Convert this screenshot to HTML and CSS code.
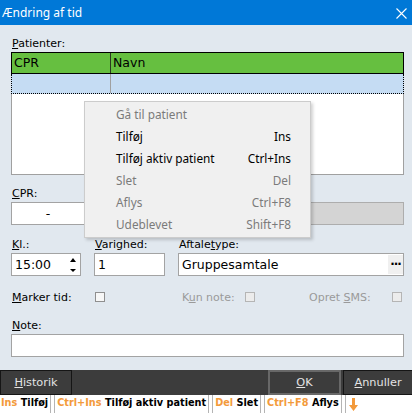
FILE: index.html
```html
<!DOCTYPE html>
<html lang="da">
<head>
<meta charset="utf-8">
<title>Ændring af tid</title>
<link rel="stylesheet" href="styles.css">
</head>
<body>
<div class="win">
  <div class="titlebar">
    <span class="title">Ændring af tid</span>
    <svg class="close" width="11" height="11" viewBox="0 0 11 11"><path d="M0.5 0.5 L10.5 10.5 M10.5 0.5 L0.5 10.5" stroke="#fff" stroke-width="1.1" fill="none"/></svg>
  </div>
  <div class="content">
    <div class="lbl"><u>P</u>atienter:</div>
    <div class="grid">
      <div class="ghead"><div class="c1">CPR</div><div class="c2">Navn</div></div>
      <div class="grow"><div class="c1"></div><div class="c2"></div></div>
      <div class="gbody"></div>
    </div>
    <div class="lbl mt11"><u>C</u>PR:</div>
    <div class="cpr-row">
      <div class="field cpr">-</div>
      <div class="field disabled name"></div>
    </div>
    <div class="trio">
      <div class="col col1">
        <div class="lbl"><u>K</u>l.:</div>
        <div class="field time"><span>15:00</span>
          <svg class="spin" width="8" height="18" viewBox="0 0 8 18"><path d="M4 2 L7 6 L1 6 Z" fill="#000"/><path d="M1 13 L7 13 L4 16 Z" fill="#000"/></svg>
        </div>
      </div>
      <div class="col col2">
        <div class="lbl"><u>V</u>arighed:</div>
        <div class="field">1</div>
      </div>
      <div class="col col3">
        <div class="lbl">Aftale<u>t</u>ype:</div>
        <div class="field type"><span>Gruppesamtale</span><span class="dots">···</span></div>
      </div>
    </div>
    <div class="chk-row">
      <span class="clbl w1"><u>M</u>arker tid:</span><span class="cb"></span>
      <span class="clbl w2 dis">K<u>u</u>n note:</span><span class="cb dis"></span>
      <span class="clbl w3 dis">Opret <u>S</u>MS:</span><span class="cb dis"></span>
    </div>
    <div class="lbl mt13"><u>N</u>ote:</div>
    <div class="field note"></div>
  </div>
  <div class="btnbar">
    <div class="btn hist"><u>H</u>istorik</div>
    <div class="spacer"></div>
    <div class="btn ok"><u>O</u>K</div>
    <div class="btn cancel"><u>A</u>nnuller</div>
  </div>
  <div class="status">
    <span class="si first"><b class="k">Ins</b> Tilføj</span>
    <span class="si"><b class="k">Ctrl+Ins</b> Tilføj aktiv patient</span>
    <span class="si"><b class="k">Del</b> Slet</span>
    <span class="si"><b class="k">Ctrl+F8</b> Aflys</span>
    <span class="si arrow"><svg width="9" height="13" viewBox="0 0 9 13"><path d="M3 0 H6 V7 H9 L4.5 13 L0 7 H3 Z" fill="#f39a3b"/></svg></span>
  </div>
  <div class="menu">
    <div class="mi dis"><span>Gå til patient</span><span></span></div>
    <div class="mi"><span>Tilføj</span><span>Ins</span></div>
    <div class="mi"><span>Tilføj aktiv patient</span><span>Ctrl+Ins</span></div>
    <div class="mi dis"><span>Slet</span><span>Del</span></div>
    <div class="mi dis"><span>Aflys</span><span>Ctrl+F8</span></div>
    <div class="mi dis"><span>Udeblevet</span><span>Shift+F8</span></div>
  </div>
</div>
</body>
</html>
```

FILE: styles.css
```css
* { box-sizing: border-box; margin: 0; padding: 0; }
html, body { width: 412px; height: 413px; overflow: hidden; }
body {
  background: #e1e8ef;
  font-family: "DejaVu Sans", Verdana, sans-serif;
  font-size: 11px;
  color: #000;
}
.win { position: relative; width: 412px; height: 413px; display: flex; flex-direction: column; }

.titlebar {
  height: 25px;
  flex: none;
  background: #0078d7;
  color: #fff;
  display: flex;
  align-items: center;
  justify-content: space-between;
  padding: 0 5px 0 2px;
  font-family: "Noto Sans", sans-serif;
  font-size: 12px;
}
.close { display: block; margin-top: 1px; }

.content {
  flex: 1;
  padding: 11px 8px 13px 11px;
  display: flex;
  flex-direction: column;
}
.lbl { height: 16px; line-height: 16px; padding-left: 1px; white-space: nowrap; }
.mt11 { margin-top: 11px; }
.mt13 { margin-top: 13px; }

.grid { height: 123px; display: flex; flex-direction: column; font-size: 12.5px; }
.ghead { height: 22px; flex: none; background: #66bf40; border: 1px solid #000; display: flex; }
.ghead .c1 { width: 99px; border-right: 1px solid #2b3a20; padding-left: 2px; line-height: 20px; }
.ghead .c2 { flex: 1; padding-left: 2px; line-height: 20px; }
.grow { height: 20px; flex: none; background: #c5dcf3; border: 1px dotted #000; border-top: none; display: flex; }
.grow .c1 { width: 99px; border-right: 1px solid #a0a0a0; }
.gbody { flex: 1; background: #fff; border: 1px solid #a0a0a0; border-top: none; }

.field {
  height: 23px;
  background: #fff;
  border: 1px solid #a3a3a3;
  font-size: 12.5px;
  line-height: 21px;
  padding-left: 3px;
  white-space: nowrap;
}
.cpr-row { display: flex; gap: 4px; }
.cpr { width: 74px; text-align: center; padding-left: 0; }
.name { flex: 1; }
.disabled { background: #d4d4d4; border-color: #adadad; }

.trio { display: flex; gap: 13px; margin-top: 12px; }
.col1 { width: 70px; }
.col2 { width: 71px; }
.col3 { flex: 1; }
.time { display: flex; justify-content: space-between; align-items: center; padding-right: 3px; }
.spin { display: block; }
.type { display: flex; justify-content: space-between; padding-right: 0; }
.dots {
  width: 15px;
  margin: 1px 0;
  background: #f0f0f0;
  line-height: 19px;
  text-align: center;
  font-weight: bold;
  font-size: 12px;
  letter-spacing: -1px;
}

.chk-row { display: flex; align-items: center; height: 16px; margin-top: 13px; }
.clbl { white-space: nowrap; flex: none; }
.w1 { width: 84px; padding-left: 1px; }
.w2 { width: 63px; margin-left: 77px; }
.w3 { width: 83px; margin-left: 54px; }
.dis { color: #9a9a9a; }
.cb { width: 10px; height: 10px; flex: none; border: 1px solid #8f8f8f; background: #f7f7f7; }
.cb.dis { border-color: #b5b5b5; background: #ececec; }

.btnbar { height: 25px; flex: none; background: #3c3c3c; display: flex; }
.btn {
  color: #e4e4e4;
  font-size: 11.3px;
  line-height: 23px;
  border: 1px solid #151515;
  text-align: center;
  white-space: nowrap;
}
.hist { width: 72px; }
.spacer { flex: 1; }
.ok { width: 73px; border: 2px solid #686868; line-height: 21px; margin-right: 2px; }
.cancel { width: 69px; border-right: none; }

.status {
  height: 18px;
  flex: none;
  background: #fff;
  display: flex;
  gap: 3px;
  font-family: "DejaVu Sans Condensed", "DejaVu Sans", sans-serif;
  font-weight: bold;
  font-size: 10.8px;
  line-height: 16px;
}
.si { border: 1px solid #b4b4b4; border-top: none; border-bottom: none; padding: 0 2px; white-space: nowrap; }
.si.first { border-left: none; padding-left: 1px; }
.k { color: #f39a3b; }
.arrow { display: flex; align-items: center; padding: 0 3px; border-right: none; }
.arrow svg { display: block; }

.menu {
  position: absolute;
  left: 84px;
  top: 101px;
  width: 227px;
  height: 137px;
  background: #f0f0f0;
  border: 1px solid #cccccc;
  box-shadow: 2px 2px 3px rgba(0,0,0,0.18);
  padding: 1px 0 2px;
  font-family: "Noto Sans", sans-serif;
  font-size: 11.8px;
}
.mi { height: 22px; line-height: 22px; display: flex; justify-content: space-between; padding: 0 19px 0 31px; white-space: nowrap; }
.mi.dis { color: #7b7b7b; }
```
